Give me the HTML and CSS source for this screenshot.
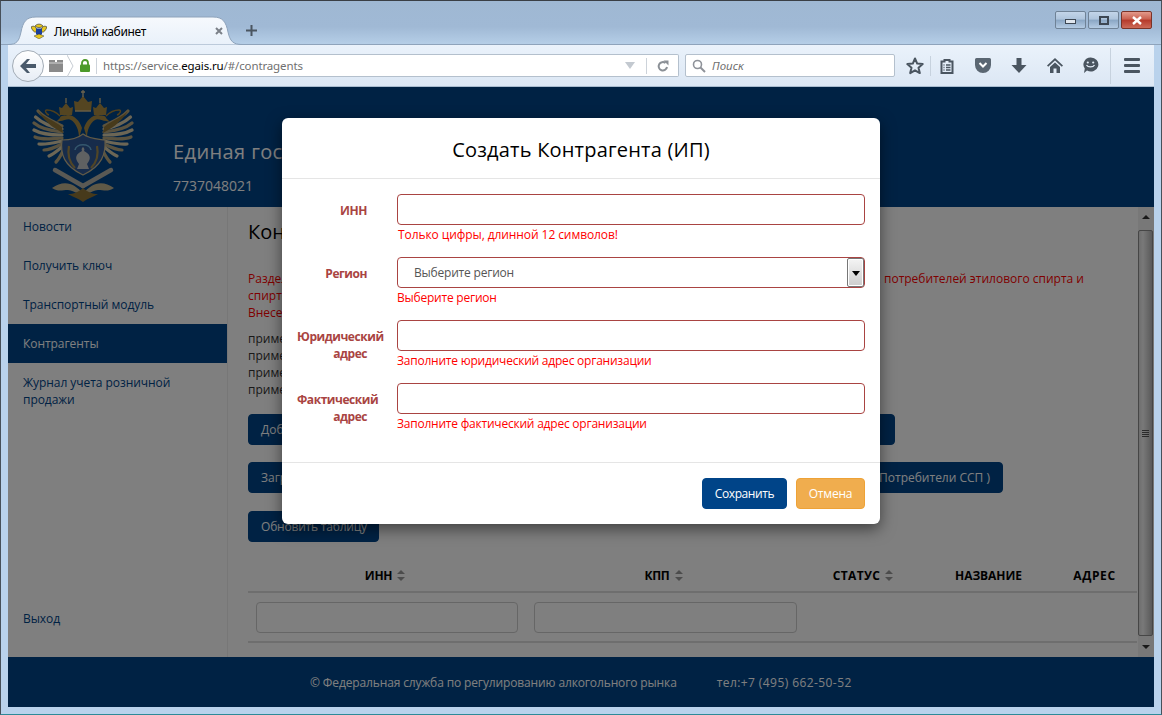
FILE: index.html
```html
<!DOCTYPE html>
<html lang="ru">
<head>
<meta charset="utf-8">
<title>Личный кабинет</title>
<link rel="stylesheet" href="styles.css">
</head>
<body>
<div class="window">
  <div class="tabstrip">
    <div class="tab">
      <svg class="tab-shape" viewBox="0 0 234 29" width="234" height="29"><path d="M0 28.5C9 28.5 11 25 13 16 15 6 18 1 28 1H205C215 1 218 6 220 16 222 25 225 28.5 234 28.5" fill="url(#tabfill)" stroke="#8ea3bb"/><defs><linearGradient id="tabfill" x1="0" y1="0" x2="0" y2="1"><stop offset="0" stop-color="#f6f9fd"/><stop offset="1" stop-color="#e9f1fa"/></linearGradient></defs></svg>
      <svg class="favicon" viewBox="0 0 16 16" width="16" height="16"><path d="M0 4C3 2 5 4 6 7 5 11 2 9 0 4ZM16 4C13 2 11 4 10 7 11 11 14 9 16 4Z" fill="#e8c820" stroke="#222" stroke-width=".6"/><path d="M4 3C6 .5 10 .5 12 3 10 5 6 5 4 3Z" fill="#e8c820" stroke="#222" stroke-width=".6"/><path d="M5 5.500H11V11L8 14 5 11Z" fill="#1c3f9a"/><path d="M3 13L8 11 13 13 8 16Z" fill="#e8c820" stroke="#222" stroke-width=".4"/></svg>
      <span class="tab-title">Личный кабинет</span>
      <svg class="tab-close" viewBox="0 0 8 8" width="8" height="8"><path d="M1 1L7 7M7 1L1 7" stroke="#7b8088" stroke-width="2"/></svg>
    </div>
    <svg class="newtab" viewBox="0 0 11 11" width="11" height="11"><path d="M5.500 0V11M0 5.500H11" stroke="#4a5560" stroke-width="2"/></svg>
    <div class="winbtns">
      <div class="winbtn"><span class="gl-min"></span></div>
      <div class="winbtn"><span class="gl-max"></span></div>
      <div class="winbtn close"><svg viewBox="0 0 12 9" width="12" height="9"><path d="M2 1L10 8M10 1L2 8" stroke="#fff" stroke-width="2.400"/></svg></div>
    </div>
  </div>

  <div class="navbar">
    <div class="backbtn"><svg viewBox="0 0 16 14" width="16" height="14"><path d="M7 0L0 7 7 14H10L6 9H16V5H6L10 0Z" fill="#4a5a6b"/></svg></div>
    <div class="urlbar">
      <svg class="pg-icon" viewBox="0 0 14 12" width="14" height="12"><path d="M0 0H6V2H8V0H14V12H0Z" fill="#8a8a8a"/><path d="M0 3H14" stroke="#d5d5d5"/></svg>
      <svg class="chev" viewBox="0 0 7 22" width="7" height="22"><path d="M0 0L6 11 0 22" fill="none" stroke="#c6ccd3"/></svg>
      <svg class="lock" viewBox="0 0 12 13" width="12" height="13"><path d="M3 6V4A3 3 0 0 1 9 4V6" fill="none" stroke="#4c9a2a" stroke-width="1.800"/><rect x="1" y="5.500" width="10" height="7.500" rx="1" fill="#4c9a2a"/></svg>
      <span class="sep"></span>
      <span class="url">https://service.<b>egais.ru</b>/#/contragents</span>
      <svg class="url-drop" viewBox="0 0 10 7" width="10" height="7"><path d="M0 0H10L5 7Z" fill="#c3c9d0"/></svg>
      <span class="sep sep-r"></span>
      <svg class="reload" viewBox="0 0 12 12" width="12" height="12"><path d="M10 7A4.200 4.200 0 1 1 8.500 3" fill="none" stroke="#8b9096" stroke-width="2"/><path d="M6.500 0.500L11.500 0.500V5.500Z" fill="#8b9096"/></svg>
    </div>
    <div class="searchbar">
      <svg viewBox="0 0 14 14" width="14" height="14"><circle cx="5.500" cy="5.500" r="4" fill="none" stroke="#8e9299" stroke-width="1.600"/><path d="M8.500 8.500L13 13" stroke="#8e9299" stroke-width="2"/></svg>
      <span class="search-ph">Поиск</span>
    </div>
    <div class="tools">
      <svg class="t-star" viewBox="0 0 18 18" width="18" height="18"><path d="M9 1.500L11.200 6.600 16.700 7.100 12.500 10.700 13.800 16.100 9 13.300 4.200 16.100 5.500 10.700 1.300 7.100 6.800 6.600Z" fill="none" stroke="#4a5560" stroke-width="2" stroke-linejoin="round"/></svg>
      <span class="t-sep"></span>
      <svg class="t-clip" viewBox="0 0 16 16" width="16" height="16"><path d="M2.500 3.500H5.500V2H10.500V3.500H13.500V15H2.500Z" fill="none" stroke="#4a5560" stroke-width="2"/><path d="M4.500 7H5.500M7 7H11.500M4.500 9.500H5.500M7 9.500H11.500M4.500 12H5.500M7 12H11.500" stroke="#4a5560" stroke-width="1.400"/></svg>
      <svg class="t-pocket" viewBox="0 0 16 15" width="16" height="15"><path d="M1.500 0H14.500A1.500 1.500 0 0 1 16 1.500V7A8 8 0 0 1 0 7V1.500A1.500 1.500 0 0 1 1.500 0Z" fill="#5a6672"/><path d="M4.500 5L8 8.500 11.500 5" fill="none" stroke="#fff" stroke-width="2"/></svg>
      <svg class="t-down" viewBox="0 0 16 16" width="16" height="16"><path d="M5.500 0H10.500V7H15.500L8 15 .5 7H5.500Z" fill="#4a5560"/></svg>
      <svg class="t-home" viewBox="0 0 16 15" width="16" height="15"><path d="M8 0L16 7.500 14.800 8.700 8 2.600 1.200 8.700 0 7.500Z" fill="#4a5560"/><path d="M3 9L8 4.500 13 9V15H9.500V10.500H6.500V15H3Z" fill="#4a5560"/></svg>
      <svg class="t-smile" viewBox="0 0 17 17" width="17" height="17"><path d="M8.500 0.500A7.500 7 0 1 1 5 13.500L2 16 2.800 11.500A7.500 7 0 0 1 8.500 0.500Z" fill="#4a5560"/><circle cx="5.800" cy="5.500" r="1.100" fill="#e4edf7"/><circle cx="11.200" cy="5.500" r="1.100" fill="#e4edf7"/><path d="M4.500 8C6 10.500 11 10.500 12.500 8" fill="none" stroke="#e4edf7" stroke-width="1.300"/></svg>
      <span class="t-sep t-sep2"></span>
      <span class="t-menu"><i></i><i></i><i></i></span>
    </div>
  </div>

  <div class="page">
    <header class="site-head">
      <svg class="crest" viewBox="0 0 102 112" width="102" height="112">
        <defs>
          <g id="half">
            <g fill="none" stroke-linecap="round" stroke-width="3.200">
              <path d="M30 36C22 32 12 28 6 21" stroke="#b9a67a"/>
              <path d="M30 39C20 37 10 33 3.500 27" stroke="#d8ccab"/>
              <path d="M30 42C20 41 9 39 2 33" stroke="#b5a680"/>
              <path d="M30 45C20 45 9 44 2 40" stroke="#d8ccab"/>
              <path d="M30 48C20 49 10 50 3 47" stroke="#b5a680"/>
              <path d="M30 51C21 53 13 55 7 54" stroke="#d8ccab"/>
              <path d="M30 54C24 57 18 60 12 60" stroke="#b5a680"/>
              <path d="M30 57C26 60 22 64 17 66" stroke="#d8ccab"/>
              <path d="M31 61C29 65 27 69 24 72" stroke="#b5a680"/>
            </g>
            <path d="M6 21C11 27 22 30 30 37L31 43C24 39 14 34 6 21Z" fill="#8f7436"/>
            <path d="M47 48C47 40 44 33 39 30 36 28 32 31 28 31L24 32 28 28C28 25 33 26 36 25 42 25 48 31 50 38Z" fill="#a98a42"/>
            <path d="M28 26C24 22 20 20 15 20 12 20 14 24 17 25" fill="none" stroke="#a07f38" stroke-width="1.400"/>
            <path d="M28 25L27 17 30 18 34 13 38 18 41 17 40 25Z" fill="#a98a42"/>
            <path d="M34 8V13" stroke="#c9b584" stroke-width="1.400"/>
            <path d="M23 80L51 96" stroke="#b5b3a8" stroke-width="4.500" stroke-linecap="round"/>
            <path d="M20 98C26 94 32 92 38 94 44 96 48 100 50 103 44 104 40 100 36 100 30 100 26 102 20 98Z" fill="#bfb28f"/>
            <path d="M51 98C46 102 42 104 36 104 41 107 46 108 51 112Z" fill="#8f7436"/>
          </g>
        </defs>
        <use href="#half"/>
        <use href="#half" transform="matrix(-1 0 0 1 102 0)"/>
        <path d="M43 21L42 11 46 12 51 6 56 12 60 11 59 21Z" fill="#a98a42"/>
        <path d="M43 21H59" stroke="#cdb988" stroke-width="1.500"/>
        <path d="M51 0V7M49 2H53" stroke="#d6c69c" stroke-width="1.300"/>
        <path d="M30 50C37 50 45 49 51 44 57 49 65 49 73 50 74 64 70 76 51 85 32 76 28 64 30 50Z" fill="#2f5896" stroke="#c6b78f" stroke-width="1.200"/>
        <path d="M51 57C52 58 53 59 52 61 58 64 60 68 55 74L57 79H45L47 74C42 68 44 64 50 61 49 59 50 58 51 57Z" fill="#bfc2c4"/>
        <path d="M43 60C44 53 58 53 59 60" fill="none" stroke="#6ab0dc" stroke-width="1.600"/>
        <path d="M37 56C35 66 38 73 43 78M65 56C67 66 64 73 59 78" fill="none" stroke="#a08a4c" stroke-width="2.200"/>
      </svg>
      <div class="brand">
        <div class="brand-title">Единая государственная автоматизированная</div>
        <div class="brand-inn">7737048021</div>
      </div>
    </header>

    <div class="middle">
      <nav class="side">
        <a class="side-item">Новости</a>
        <a class="side-item">Получить ключ</a>
        <a class="side-item">Транспортный модуль</a>
        <a class="side-item active">Контрагенты</a>
        <a class="side-item">Журнал учета розничной продажи</a>
        <a class="side-item side-exit">Выход</a>
      </nav>
      <main class="content">
        <h1 class="content-title">Контрагенты</h1>
        <div class="notes">
          <div class="note-line"><span>Раздел предназначен для ведения контрагентов: поставщиков</span><span>, потребителей этилового спирта и</span></div>
          <div>спиртосодержащей продукции</div>
          <div>Внесение сведений обязательно</div>
        </div>
        <div class="samples">
          <div>пример заполнения: поставщик</div>
          <div>пример заполнения: производитель</div>
          <div>пример заполнения: импортер</div>
          <div>пример заполнения: потребитель</div>
        </div>
        <div class="btn-row"><button class="btn btn-add">Добавить контрагента</button></div>
        <div class="btn-row"><button class="btn btn-load"><span>Загрузить контрагентов из файла</span><span>Потребители ССП )</span></button></div>
        <div class="btn-row"><button class="btn btn-refresh">Обновить таблицу</button></div>
        <div class="grid-table">
          <div class="th th-sort">ИНН<svg viewBox="0 0 8 11" width="8" height="11"><path d="M4 0L8 4H0ZM4 11L0 7H8Z" fill="#999"/></svg></div>
          <div class="th th-sort">КПП<svg viewBox="0 0 8 11" width="8" height="11"><path d="M4 0L8 4H0ZM4 11L0 7H8Z" fill="#999"/></svg></div>
          <div class="th th-sort th-status">СТАТУС<svg viewBox="0 0 8 11" width="8" height="11"><path d="M4 0L8 4H0ZM4 11L0 7H8Z" fill="#999"/></svg></div>
          <div class="th">НАЗВАНИЕ</div>
          <div class="th th-addr">АДРЕС</div>
          <div class="td"><input class="filter" type="text"></div>
          <div class="td td2"><input class="filter" type="text"></div>
          <div class="td td-rest"></div>
        </div>
      </main>
      <div class="scroll">
        <span class="sc-up"></span>
        <div class="sc-thumb"><i></i></div>
        <span class="sc-down"></span>
      </div>
    </div>

    <footer class="site-foot">
      <span class="foot-org">© Федеральная служба по регулированию алкогольного рынка</span>
      <span class="foot-tel">тел:+7 (495) 662-50-52</span>
    </footer>

    <div class="overlay">
      <div class="modal">
        <div class="modal-head">Создать Контрагента (ИП)</div>
        <div class="modal-body">
          <div class="form-row">
            <label class="form-label">ИНН</label>
            <div class="form-field">
              <input class="form-input" type="text">
              <div class="form-err err-first">Только цифры, длинной 12 символов!</div>
            </div>
          </div>
          <div class="form-row">
            <label class="form-label">Регион</label>
            <div class="form-field">
              <div class="form-input form-select">Выберите регион<span class="sel-btn"></span></div>
              <div class="form-err">Выберите регион</div>
            </div>
          </div>
          <div class="form-row">
            <label class="form-label">Юридический адрес</label>
            <div class="form-field">
              <input class="form-input" type="text">
              <div class="form-err">Заполните юридический адрес организации</div>
            </div>
          </div>
          <div class="form-row">
            <label class="form-label">Фактический адрес</label>
            <div class="form-field">
              <input class="form-input" type="text">
              <div class="form-err">Заполните фактический адрес организации</div>
            </div>
          </div>
        </div>
        <div class="modal-foot">
          <button class="btn btn-save">Сохранить</button>
          <button class="btn btn-cancel">Отмена</button>
        </div>
      </div>
    </div>
  </div>
</div>
</body>
</html>
```

FILE: styles.css
```css
* { box-sizing: border-box; }
html, body { margin: 0; padding: 0; }
body { font-family: "Open Sans", "Noto Sans", sans-serif; font-size: 12px; line-height: 17px; color: #333; }

.window {
  width: 1162px; height: 715px; overflow: hidden;
  display: flex; flex-direction: column;
  background: #b9d2ec;
  border-top: 1px solid #3a3f45;
  border-left: 1px solid #47505a;
  border-right: 1px solid #47505a;
  border-bottom: 1px solid #2d8a98;
}

/* tab strip */
.tabstrip {
  height: 44px; flex: none; display: flex; align-items: flex-end;
  padding: 0 0 0 7px;
  background: linear-gradient(#9fb8d3 0, #a0b9d5 60%, #b5cee7 100%);
  border-bottom: 1px solid #8ea3bb;
  position: relative;
}
.tab {
  position: relative; width: 234px; height: 29px; margin-bottom: -1px;
  display: flex; align-items: center; padding: 1px 0 0 23px;
  color: #000; font-family: "Noto Sans", sans-serif;
}
.tab-shape { position: absolute; left: 0; top: 0; }
.favicon { position: relative; flex: none; }
.tab-title { position: relative; margin-left: 7px; flex: 1; font-size: 12px; letter-spacing: -.35px; }
.tab-close { position: relative; margin-right: 19px; }
.newtab { margin: 0 0 8px 4px; }
.winbtns { margin-left: auto; align-self: flex-start; display: flex; gap: 2px; margin-top: 10px; margin-right: 9px; }
.winbtn {
  width: 31px; height: 18px; border: 1px solid #6f8296; border-radius: 2px;
  background: linear-gradient(#c3d5e9 0, #aec4dc 45%, #8aa6c4 50%, #b4cbe3 100%);
  display: flex; align-items: center; justify-content: center;
}
.winbtn.close { background: linear-gradient(#e29a8c 0, #c9604f 45%, #b5392a 50%, #cc6a58 100%); border-color: #7a3328; }
.gl-min { width: 11px; height: 5px; margin-top: 3px; background: #dfe6ee; border: 1px solid #3d4753; }
.gl-max { width: 10px; height: 9px; background: transparent; border: 2px solid #3d4753; }

/* nav bar */
.navbar {
  height: 42px; flex: none; margin: 0 7px; position: relative;
  display: flex; align-items: center;
  background: linear-gradient(#eaf2fb, #dce7f4);
  border-bottom: 1px solid #a9bccf;
  padding: 0 0 0 4px;
}
.backbtn {
  position: relative; z-index: 1; flex: none; width: 32px; height: 32px; border-radius: 50%;
  border: 1px solid #a3acb6; background: linear-gradient(#fff, #e7edf5);
  display: flex; align-items: center; justify-content: center;
}
.urlbar {
  margin-left: -5px; width: 640px; height: 23px; flex: none;
  display: flex; align-items: center; padding-left: 10px;
  background: #fff; border: 1px solid #b4c0cd; border-left: 0;
  border-radius: 0 2px 2px 0;
}
.pg-icon { flex: none; }
.chev { flex: none; margin-left: 4px; }
.lock { flex: none; margin-left: 5px; }
.sep { width: 1px; height: 16px; background: #cdd3da; margin-left: 5px; flex: none; }
.url { margin-left: 6px; color: #6f6f6f; font-family: "Noto Sans", sans-serif; font-size: 11.500px; letter-spacing: -.13px; flex: 1; }
.url b { font-weight: 400; color: #000; }
.url-drop { flex: none; margin-right: 11px; }
.sep-r { margin: 0; }
.reload { flex: none; margin: 0 9px 0 10px; }
.searchbar {
  margin-left: 6px; width: 210px; height: 23px; flex: none;
  display: flex; align-items: center; gap: 6px; padding-left: 6px;
  background: #fff; border: 1px solid #b4c0cd; border-radius: 2px;
}
.search-ph { font-style: italic; color: #6f6f6f; font-family: "Noto Sans", sans-serif; font-size: 11.500px; }
.tools { flex: 1; position: relative; height: 100%; display: flex; align-items: center; }
.tools svg { flex: none; }
.t-star { margin-left: 11px; }
.t-sep { width: 1px; height: 20px; background: #c7d2de; margin-left: 6px; flex: none; }
.t-clip { margin-left: 8px; }
.t-pocket { margin-left: 20px; }
.t-down { margin-left: 20px; }
.t-home { margin-left: 20px; }
.t-smile { margin-left: 19px; }
.t-sep2 { margin-left: 11px; height: 36px; }
.t-menu { margin-left: 13px; display: flex; flex-direction: column; gap: 3px; width: 16px; }
.t-menu i { display: block; height: 3px; background: #4a5560; border-radius: 1px; }

/* page */
.page { flex: 1; margin: 0 7px 7px; position: relative; display: flex; flex-direction: column; background: #fff; min-height: 0; }
.site-head { height: 120px; flex: none; background: #004488; display: flex; padding: 3px 0 0 24px; }
.crest { flex: none; }
.brand { margin-left: 39px; color: #fff; padding-top: 48px; white-space: nowrap; overflow: hidden; }
.brand-title { font-size: 20px; line-height: 28px; letter-spacing: .4px; }
.brand-inn { font-size: 14px; line-height: 20px; margin-top: 10px; }

.middle { flex: 1; display: flex; min-height: 0; }
.side { width: 220px; flex: none; display: flex; flex-direction: column; border-right: 1px solid #eee; letter-spacing: -.05px; }
.side-item { display: block; padding: 11px 15px; color: #004488; }
.side-item.active { background: #004488; color: #fff; }
.side-exit { margin-top: auto; padding-bottom: 30px; }
.content { flex: 1; min-width: 0; padding: 0 0 0 20px; overflow: hidden; }
.content-title { margin: 13px 0 0; font-size: 20px; font-weight: 400; line-height: 24px; color: #000; }
.notes { margin-top: 26px; color: #f00; }
.note-line { display: flex; justify-content: space-between; width: 836px; }
.samples { margin-top: 9px; }
.samples + .btn-row { margin-top: 16px; }
.btn-row + .btn-row { margin-top: 17px; }
.btn-row + .btn-row + .btn-row { margin-top: 18px; }
.btn {
  font: inherit; height: 31px; padding: 0 12px; border: 1px solid #004488; border-radius: 4px;
  background: #004488; color: #fff; display: inline-flex; align-items: center; white-space: nowrap;
}
.btn-add { width: 647px; }
.btn-load { width: 755px; justify-content: space-between; }
.btn-refresh { width: 131px; letter-spacing: -.2px; }
.grid-table {
  margin-top: 24px; width: 889px;
  display: grid; grid-template-columns: 278px 279px 116px 135px 81px;
}
.th {
  height: 27px; font-weight: 700; color: #000; display: flex; align-items: center; justify-content: center; gap: 5px;
  border-bottom: 2px solid #ddd; padding-bottom: 6px; letter-spacing: -.05px;
}
.th-sort { padding-right: 4px; letter-spacing: -.3px; }
.th-sort svg { flex: none; }
.th-status { padding-right: 0; letter-spacing: .35px; }
.th-addr { letter-spacing: .6px; padding-right: 4px; }
.td { height: 50px; padding: 9px 8px 0; border-bottom: 2px solid #ddd; }
.td-rest { grid-column: 3 / 6; }
.filter { display: block; width: 100%; height: 31px; border: 1px solid #ccc; border-radius: 4px; background: #fff; }
.td2 .filter { width: 263px; }

.scroll { width: 16px; flex: none; background: #f0f0f0; position: relative; display: flex; flex-direction: column; align-items: center; }
.sc-up { margin-top: 8px; border: 4px solid transparent; border-bottom: 4px solid #333; border-top: 0; }
.sc-thumb {
  margin-top: 11px; width: 15px; height: 406px; align-self: flex-start;
  border: 1px solid #8c8c8c; border-radius: 2px;
  background: linear-gradient(90deg, #dcdcdc, #f2f2f2 30%, #b4b4b4);
  display: flex; align-items: center; justify-content: center;
}
.sc-thumb i { display: block; width: 7px; height: 7px; background: repeating-linear-gradient(#555 0 1px, transparent 1px 2px); }
.sc-down { margin-top: 9px; border: 4px solid transparent; border-top: 4px solid #333; border-bottom: 0; }

.site-foot {
  height: 50px; flex: none; background: #004488; color: #fff; display: flex; align-items: center;
  padding: 0 0 0 302px; gap: 40px;
}
.foot-org { letter-spacing: -.13px; }
.foot-tel { letter-spacing: .42px; }

/* modal */
.overlay { position: absolute; inset: 0; background: rgba(0,0,0,.5); }
.modal {
  position: absolute; left: 274px; top: 31px; width: 598px;
  background: #fff; border-radius: 6px; box-shadow: 0 5px 15px rgba(0,0,0,.5);
}
.modal-head { height: 61px; padding-top: 2px; border-bottom: 1px solid #e5e5e5; display: flex; align-items: center; justify-content: center; font-size: 20px; color: #000; letter-spacing: .2px; }
.modal-body { padding: 15px 15px 16px; }
.form-row { display: flex; margin-bottom: 15px; }
.form-label { width: 70px; margin: 8px 30px 0 0; color: #a94442; font-weight: 700; text-align: right; line-height: 17px; flex: none; letter-spacing: -.45px; }
.form-field { flex: 1; }
.form-input { display: block; width: 100%; height: 31px; border: 1px solid #a94442; border-radius: 4px; background: #fff; }
.form-select { position: relative; padding-left: 16px; line-height: 30px; color: #555; letter-spacing: -.2px; }
.sel-btn {
  position: absolute; right: 0; top: 0; bottom: 0; width: 17px;
  background: linear-gradient(#f4f4f4, #cdcdcd); border: 1px solid #777; border-radius: 2px;
  box-shadow: inset 0 0 0 1px #fff;
}
.sel-btn::after { content: ""; position: absolute; left: 4px; top: 12px; border: 4px solid transparent; border-top: 5px solid #000; border-bottom: 0; }
.form-err { color: #f00; height: 17px; padding-top: 1px; letter-spacing: -.22px; }
.err-first { padding-left: 1px; letter-spacing: -.08px; }
.modal-foot { border-top: 1px solid #e5e5e5; padding: 15px; display: flex; justify-content: flex-end; gap: 9px; }
.btn-save { width: 85px; justify-content: center; padding: 0; letter-spacing: -.4px; }
.btn-cancel { width: 69px; justify-content: center; padding: 0; background: #f0ad4e; border-color: #eea236; letter-spacing: -.2px; }
```
